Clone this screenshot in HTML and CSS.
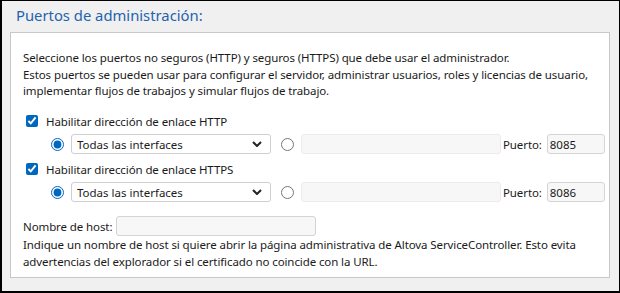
FILE: index.html
```html
<!DOCTYPE html>
<html lang="es">
<head>
    <meta charset="UTF-8">
    <title>Puertos de administración</title>
    <link rel="stylesheet" href="styles.css">
</head>
<body>
    <div class="frame">
        <h1 class="title">Puertos de administración:</h1>

        <div class="panel">
            <p class="intro">
                Seleccione los puertos no seguros (HTTP) y seguros (HTTPS) que debe usar el administrador.<br>
                Estos puertos se pueden usar para configurar el servidor, administrar usuarios, roles y licencias de usuario,<br>
                implementar flujos de trabajos y simular flujos de trabajo.
            </p>

            <!-- HTTP -->
            <label class="check-row">
                <input type="checkbox" checked>
                <span>Habilitar dirección de enlace HTTP</span>
            </label>
            <div class="bind-row">
                <input type="radio" name="http" checked>
                <div class="select-wrap">
                    <select class="iface">
                        <option>Todas las interfaces</option>
                    </select>
                    <svg class="chevron" width="10" height="6" viewBox="0 0 10 6"><path d="M1 1 L5 5 L9 1" fill="none" stroke="#222" stroke-width="2"/></svg>
                </div>
                <input type="radio" name="http">
                <input type="text" class="address" disabled>
                <span class="port-label">Puerto:</span>
                <input type="text" class="port" value="8085">
            </div>

            <!-- HTTPS -->
            <label class="check-row">
                <input type="checkbox" checked>
                <span>Habilitar dirección de enlace HTTPS</span>
            </label>
            <div class="bind-row">
                <input type="radio" name="https" checked>
                <div class="select-wrap">
                    <select class="iface">
                        <option>Todas las interfaces</option>
                    </select>
                    <svg class="chevron" width="10" height="6" viewBox="0 0 10 6"><path d="M1 1 L5 5 L9 1" fill="none" stroke="#222" stroke-width="2"/></svg>
                </div>
                <input type="radio" name="https">
                <input type="text" class="address" disabled>
                <span class="port-label">Puerto:</span>
                <input type="text" class="port" value="8086">
            </div>

            <!-- Host name -->
            <div class="host-row">
                <span>Nombre de host:</span>
                <input type="text" class="host">
            </div>
            <p class="note">
                Indique un nombre de host si quiere abrir la página administrativa de Altova ServiceController. Esto evita<br>
                advertencias del explorador si el certificado no coincide con la URL.
            </p>
        </div>
    </div>
</body>
</html>
```

FILE: styles.css
```css
body {
    margin: 0;
    font-family: 'Noto Sans', 'Open Sans', sans-serif;
    font-size: 11.5px;
    letter-spacing: -0.1px;
    color: #1a1a1a;
}

.frame {
    width: 620px;
    height: 293px;
    box-sizing: border-box;
    border: 1px solid #000;
    border-width: 1px 1px 2px 2px;
    background: #f0f0f0;
    padding: 0 9px 0 8px;
}

.title {
    margin: 0;
    padding: 4px 0 0 6px;
    height: 31px;
    box-sizing: border-box;
    font-size: 14.8px;
    font-weight: normal;
    letter-spacing: 0;
    color: #1f63ad;
}

.panel {
    background: #fff;
    border: 1px solid #c8c8c8;
    height: 246px;
    box-sizing: border-box;
    padding: 17px 0 0 12px;
    white-space: nowrap;
}

.intro {
    margin: 0;
    line-height: 16.5px;
}

.note {
    margin: 0;
    line-height: 17px;
}

.check-row {
    display: flex;
    align-items: center;
    gap: 8px;
    margin-top: 13px;
    height: 17px;
    padding-left: 3px;
}

.check-row + .bind-row {
    margin-top: 4.5px;
}

.bind-row + .check-row {
    margin-top: 6.5px;
}

input[type="checkbox"], input[type="radio"] {
    margin: 0;
    flex-shrink: 0;
    accent-color: #0067c0;
}

input[type="checkbox"] {
    width: 12px;
    height: 12px;
}

.bind-row {
    display: flex;
    align-items: center;
    padding-left: 28px;
    height: 20px;
}

.bind-row > * {
    flex-shrink: 0;
}

input[type="radio"] {
    width: 13px;
    height: 13px;
}

.select-wrap {
    position: relative;
    margin-left: 7px;
}

.iface {
    appearance: none;
    display: block;
    width: 200px;
    height: 20px;
    border: 1px solid #cfcfcf;
    border-radius: 3px;
    background: #fff;
    padding: 0 5px;
    font: inherit;
    color: #1a1a1a;
}

.chevron {
    position: absolute;
    right: 9px;
    top: 7px;
}

.select-wrap + input[type="radio"] {
    margin-left: 10px;
}

.address {
    width: 200px;
    height: 20px;
    box-sizing: border-box;
    margin-left: 7px;
    border: 1px solid #ececec;
    border-radius: 3px;
    background: #f7f7f7;
}

.port-label {
    margin-left: 2px;
}

.port {
    width: 58px;
    height: 20px;
    box-sizing: border-box;
    margin-left: 5px;
    border: 1px solid #d4d4d4;
    border-radius: 3px;
    background: #f7f7f7;
    padding: 0 2px;
    font: inherit;
    color: #1a1a1a;
}

.host-row {
    display: flex;
    align-items: center;
    gap: 4px;
    margin-top: 14px;
}

.host {
    width: 200px;
    height: 20px;
    box-sizing: border-box;
    border: 1px solid #d4d4d4;
    border-radius: 3px;
    background: #f7f7f7;
}
```
